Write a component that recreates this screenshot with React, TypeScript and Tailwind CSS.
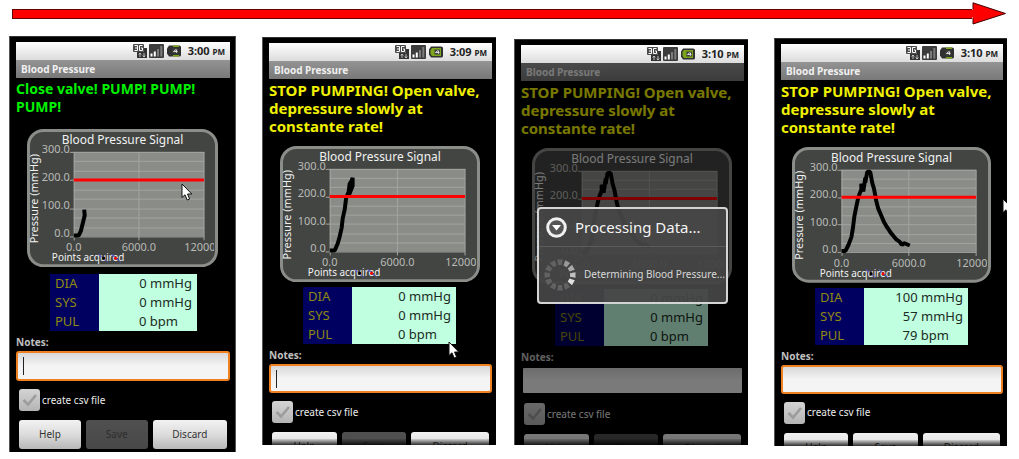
import { useId } from "react";
import clsx from "clsx";

type Reading = { label: string; value: string };

type PhoneProps = {
  className: string;
  time: string;
  message: string;
  tone: "green" | "yellow";
  curve: string;
  readings: Reading[];
  small?: boolean;
  charging?: boolean;
  caret?: boolean;
  processing?: boolean;
  saveEnabled?: boolean;
};

const RISE_SHORT = "M47 107 H52 L54 103 L56 95 L57 91 L58 87 L57.5 81";
const RISE = "M50 105 H55 L58 98 L60 91 L62 82 L63 73 L65 64 L66.5 52 L69 46 L70 38 L72 35 L73 32 V40 L69 50";
const FULL =
  "M50 105 H54 L57 99 L60 91 L61.5 82 L63 70 L65 60 L66.5 53 L68 48 L70 43 V37 L72 45 L74 31 L74 36 L76 25 H79 L81 36 L83 43 L85 54 L87 62 L90 69 L93 76 L96 81 L100 87 L105 93 L109 96 L111 99 L113 97 L119 99.5";

const EMPTY: Reading[] = [
  { label: "DIA", value: "0 mmHg" },
  { label: "SYS", value: "0 mmHg" },
  { label: "PUL", value: "0 bpm" },
];

const FINAL: Reading[] = [
  { label: "DIA", value: "100 mmHg" },
  { label: "SYS", value: "57 mmHg" },
  { label: "PUL", value: "79 bpm" },
];

function Cursor({ className }: { className: string }) {
  return (
    <svg className={clsx("absolute z-10", className)} width="12" height="19" viewBox="0 0 12 19" aria-hidden="true">
      <path
        d="M1 1 V14.5 L4 11.8 L6.2 17 L8.6 16 L6.5 11 H10.8 Z"
        fill="#fff"
        stroke="#111"
        strokeWidth="1"
      />
    </svg>
  );
}

function StatusIcons({ charging }: { charging?: boolean }) {
  return (
    <svg width="48" height="14" viewBox="0 0 48 14" aria-hidden="true">
      <rect x="0" y="0" width="11" height="8" rx="1" fill="#4a4a4a" />
      <path d="M1.5 1.5 H4.5 V6.5 H1.5 M2 4 H4.5 M9.5 1.5 H6.5 V6.5 H9.5 V4 H8" stroke="#fff" strokeWidth="1" fill="none" />
      <path d="M4 8 H11 V4 H14 V14 H4 Z" fill="#333" />
      <path d="M7 13 V9 M5.7 10.5 L7 9 L8.3 10.5 M11 9 V13 M9.7 11.5 L11 13 L12.3 11.5" stroke="#ddd" strokeWidth="0.8" fill="none" />
      <rect x="16" y="0" width="15" height="14" rx="1" fill="#3c3c3c" />
      <path d="M17.5 9.5 H19.5 V12.5 H17.5 Z M20.8 7.5 H22.8 V12.5 H20.8 Z" fill="#fff" />
      <path d="M24 5 H26 V12.5 H24 Z M27.3 2 H29.3 V12.5 H27.3 Z" fill="#7b7b7b" />
      <path d="M36 1.5 H46 Q48 1.5 48 3 V11 Q48 12.5 46 12.5 H36 L34 9.5 V4.5 Z" fill="#303030" />
      {charging ? (
        <path d="M37 3 H46 V11 H37 L35.5 9 V5 Z" fill="#7da51c" />
      ) : (
        <path d="M40 1.5 H46 V3 H40 Z M40 11 H46 V12.5 H40 Z" fill="#7da51c" />
      )}
      <rect x="39.5" y="4.5" width="5.5" height="5" fill="#404040" />
      <path d="M40.5 7.5 H44.5 M43 5.5 L40.5 7.5 M43.5 5.5 V8.8" stroke="#e8e8e8" strokeWidth="0.9" fill="none" />
    </svg>
  );
}

function Chart({ small, curve }: { small?: boolean; curve: string }) {
  const w = small ? 192 : 201;
  const h = small ? 139 : 137;
  const left = small ? 47 : 50;
  const right = small ? 178 : 186;
  const top = 23;
  const bottom = small ? 108 : 106;
  const mid = (left + right) / 2;
  const step = (bottom - top) / 9;
  const limit = top + step * 3;
  const clip = useId();
  return (
    <svg
      viewBox={`0 0 ${w} ${h}`}
      className="block w-full font-['Noto_Sans',sans-serif]"
      role="img"
      aria-label="Blood pressure signal chart"
    >
      <defs>
        <clipPath id={clip}>
          <rect x="0" y="0" width={w - 4} height={h} />
        </clipPath>
      </defs>
      <rect x="1.5" y="1.5" width={w - 3} height={h - 3} rx="15" fill="#434542" stroke="#8b8d89" strokeWidth="3" />
      <rect x={left} y={top} width={right - left} height={bottom - top} fill="#8a8c88" />
      <g stroke="#a1a59f" strokeWidth="1">
        {Array.from({ length: 10 }, (_, i) => {
          const y = Math.round(top + step * i) + 0.5;
          return <line key={i} x1={i % 3 === 0 ? left - 4 : left} x2={right} y1={y} y2={y} />;
        })}
        <line x1={left + 0.5} x2={left + 0.5} y1={top} y2={bottom + 4} />
        <line x1={mid} x2={mid} y1={top} y2={bottom + 4} />
        <line x1={right} x2={right} y1={top} y2={bottom + 4} />
      </g>
      <path d={curve} fill="none" stroke="#000" strokeWidth="4" strokeLinejoin="bevel" />
      <line x1={left} x2={right} y1={limit} y2={limit} stroke="#f00" strokeWidth="3" />
      <g fill="#b9bbb8" className="text-[11px]" clipPath={`url(#${clip})`}>
        {["300.0", "200.0", "100.0", "0.0"].map((t, i) => (
          <text key={t} x={left - 4} y={top + step * 3 * i + 1} textAnchor="end">
            {t}
          </text>
        ))}
        <text x={left} y={bottom + 15} textAnchor="middle">0.0</text>
        <text x={mid} y={bottom + 15} textAnchor="middle">6000.0</text>
        <text x={right - 20} y={bottom + 15}>12000</text>
      </g>
      <g fill="#f2f2f2">
        <text x={w / 2} y="15" textAnchor="middle" className="text-[12px]">
          Blood Pressure Signal
        </text>
        <text x={left - 22} y={bottom + 25} className="text-[10px]">Points acquired</text>
        <text transform={`translate(11 ${small ? 70 : 69}) rotate(-90)`} textAnchor="middle" className="text-[11px]">
          Pressure (mmHg)
        </text>
      </g>
      <g transform={`translate(${left + 25} ${bottom + 17})`} strokeWidth="1.2" stroke="#5b5bd6">
        <path d="M0 1 L9 9 M13 1 L22 9" strokeDasharray="4 1.5" />
        <circle cx="5" cy="5" r="1.5" fill="#000" stroke="none" />
        <circle cx="17" cy="5" r="1.5" fill="#f00" stroke="none" />
      </g>
    </svg>
  );
}

function Spinner() {
  return (
    <svg width="32" height="32" viewBox="-16 -16 32 32" className="shrink-0" aria-hidden="true">
      {Array.from({ length: 12 }, (_, i) => (
        <path
          key={i}
          d="M-2.8 -15.5 H2.8 L1.8 -10 H-1.8 Z"
          transform={`rotate(${i * 30})`}
          fill={i >= 1 && i <= 4 ? ["#999", "#aaa", "#c0c0c0", "#e0e0e0"][i - 1] : "#626262"}
        />
      ))}
    </svg>
  );
}

function ProcessingDialog() {
  return (
    <div
      role="dialog"
      aria-label="Processing Data"
      className="absolute inset-x-4 top-[144px] z-20 rounded-[4px] border-2 border-[#d4d4d4] bg-[#464646]/93 text-[#f4f4f4]"
    >
      <div className="flex h-[38px] items-center gap-2 border-b border-[#5c5c5c] pl-[7px]">
        <svg width="21" height="21" viewBox="0 0 21 21" aria-hidden="true">
          <circle cx="10.5" cy="10.5" r="8.8" fill="#555" stroke="#f0f0f0" strokeWidth="3" />
          <path d="M6 8 H15 L10.5 13.5 Z" fill="#fff" />
        </svg>
        <h2 className="text-[15px] whitespace-nowrap">Processing Data...</h2>
      </div>
      <div className="flex h-[55px] items-center gap-2 pl-[5px]">
        <Spinner />
        <p className="text-[10px] whitespace-nowrap text-[#d8d8d8]">Determining Blood Pressure...</p>
      </div>
    </div>
  );
}

const BUTTON = "h-[29px] rounded-[3px] text-[10px] leading-[29px]";
const ENABLED = "bg-linear-to-b from-[#f2f2f2] via-[#dcdcdc] to-[#b8b8b8] text-[#333]";
const DISABLED = "bg-linear-to-b from-[#505050] to-[#484848] text-[#2e2e2e]";

function Phone(p: PhoneProps) {
  const id = useId();
  return (
    <section
      className={clsx(
        "relative min-w-0 border-t border-l border-t-[#333] border-l-[#555] bg-black pt-[5px] pl-1.5",
        p.small ? "border-r border-r-[#555] pr-[5px] pb-[3px]" : "pr-1",
        p.className,
      )}
    >
      <header className="flex h-[18px] items-center justify-end gap-[7px] bg-linear-to-b from-white to-[#dcdcdc] pr-[5px] text-[#222]">
        <StatusIcons charging={p.charging} />
        <span className="text-[11px] leading-[18px] font-bold whitespace-nowrap">
          {p.time} <span className="text-[8px]">PM</span>
        </span>
      </header>
      <div className="relative">
        <h1 className="h-[18px] bg-linear-to-b from-[#949494] to-[#787878] pl-[5px] text-[10px] leading-[18px] font-bold text-[#f0f0f0]">
          Blood Pressure
        </h1>
        <p
          className={clsx(
            "pt-[2px] leading-[18px] font-bold",
            p.small ? "pb-[13px] text-[14px]" : "pb-[11px] text-[15px]",
            p.tone === "green" ? "text-[#00f000]" : "text-[#f0f000]",
          )}
        >
          {p.message}
        </p>
        <div className="pr-3 pl-[11px]">
          <Chart small={p.small} curve={p.curve} />
        </div>
        <table
          className={clsx("ml-[34px] border-collapse text-[13px] leading-[19px]", p.small ? "mt-[7px] w-[147px]" : "mt-[5px] w-[153px]")}
        >
          <tbody>
            {p.readings.map((r) => (
              <tr key={r.label}>
                <th scope="row" className="h-[19px] w-[49px] bg-[#000060] p-0 pl-[5px] text-left font-normal text-[#8f8a10]">
                  {r.label}
                </th>
                <td
                  className={clsx(
                    "h-[19px] bg-[#c0ffe0] p-0 text-right whitespace-nowrap text-[#1c2c24]",
                    r.label === "PUL" ? "pr-[19px]" : "pr-[5px]",
                  )}
                >
                  {r.value}
                </td>
              </tr>
            ))}
          </tbody>
        </table>
        <label htmlFor={`${id}notes`} className="block h-5 pt-[3px] text-[10px] leading-[16px] font-bold text-[#c0c0c0]">
          Notes:
        </label>
        <div className="relative">
          <input
            id={`${id}notes`}
            type="text"
            className={clsx(
              "block w-full rounded-[3px] border-2 bg-linear-to-b from-[#d8d8d8] via-[#f4f4f4] to-[#f4f4f4] px-1.5 text-[12px] text-black outline-none",
              p.small ? "h-[30px]" : "h-[29px]",
              p.processing ? "border-black" : "border-[#f08020]",
            )}
          />
          {p.caret && <span className="absolute top-[6px] left-[7px] h-[18px] w-px bg-[#222]" />}
        </div>
        <div className="mt-2 flex h-[22px] items-center gap-[2px] pl-[3px]">
          <span className="relative h-[22px] w-[21px] shrink-0">
            <input
              id={`${id}csv`}
              type="checkbox"
              className="block h-[22px] w-[21px] appearance-none rounded-[3px] bg-linear-to-b from-[#d4d4d4] to-[#b4b4b4]"
            />
            <svg className="pointer-events-none absolute top-1 left-[3px]" width="16" height="14" viewBox="0 0 16 14" aria-hidden="true">
              <path d="M1.5 7 L6 11.5 L14 2" fill="none" stroke="#9c9c9c" strokeWidth="2.6" />
            </svg>
          </span>
          <label htmlFor={`${id}csv`} className="text-[10px] whitespace-nowrap text-[#ececec]">
            create csv file
          </label>
        </div>
        <div
          className={clsx(
            "relative mt-[9px] grid grid-cols-[64fr_64fr_77fr] gap-[5px] px-[3px]",
            !p.small && (p.processing ? "h-[11px] overflow-hidden" : "h-[13px] overflow-hidden"),
          )}
        >
          <button type="button" className={clsx(BUTTON, ENABLED)}>Help</button>
          <button type="button" disabled={!p.saveEnabled} className={clsx(BUTTON, p.saveEnabled ? ENABLED : DISABLED)}>
            Save
          </button>
          <button type="button" className={clsx(BUTTON, ENABLED)}>Discard</button>
          {!p.small && <span className="absolute inset-x-0 bottom-0 h-1.5 bg-linear-to-b from-black/10 to-black/80" />}
        </div>
        {p.processing && (
          <>
            <div className="absolute inset-0 z-10 bg-black/50" />
            <ProcessingDialog />
          </>
        )}
      </div>
    </section>
  );
}

export default function App() {
  const stop = "STOP PUMPING! Open valve, depressure slowly at constante rate!";
  return (
    <main className="min-h-screen overflow-hidden bg-white pt-[2px] pr-3 pl-[9px] font-['Noto_Sans',sans-serif]">
      <div className="flex h-[23px] items-center pl-[3px]" aria-hidden="true">
        <div className="h-[10px] flex-1 border border-r-0 border-[#600] bg-[#f00]" />
        <svg width="35" height="23" viewBox="0 0 35 23">
          <path d="M1 7 V0.8 L33.5 11.5 L1 22 V16" fill="#f00" stroke="#400" strokeWidth="1" />
          <rect x="0" y="7.5" width="3" height="8" fill="#f00" />
        </svg>
      </div>
      <div className="flex items-start pt-[11px]">
        <div className="relative min-w-0 flex-[227]">
          <Phone
            className=""
            small
            time="3:00"
            message="Close valve! PUMP! PUMP! PUMP!"
            tone="green"
            curve={RISE_SHORT}
            readings={EMPTY}
            caret
          />
          <Cursor className="top-[147px] left-[172px]" />
        </div>
        <div className="relative ml-[26px] min-w-0 flex-[234]">
          <Phone className="mt-px" time="3:09" message={stop} tone="yellow" curve={RISE} readings={EMPTY} charging caret />
          <Cursor className="top-[305px] left-[186px]" />
        </div>
        <div className="ml-[18px] min-w-0 flex-[234]">
          <Phone className="mt-[3px]" time="3:10" message={stop} tone="yellow" curve={FULL} readings={EMPTY} charging processing />
        </div>
        <div className="relative ml-[26px] min-w-0 flex-[233] overflow-hidden">
          <Phone className="mt-[2px]" time="3:10" message={stop} tone="yellow" curve={FULL} readings={FINAL} saveEnabled />
          <Cursor className="top-[162px] -right-[7px]" />
        </div>
      </div>
    </main>
  );
}
